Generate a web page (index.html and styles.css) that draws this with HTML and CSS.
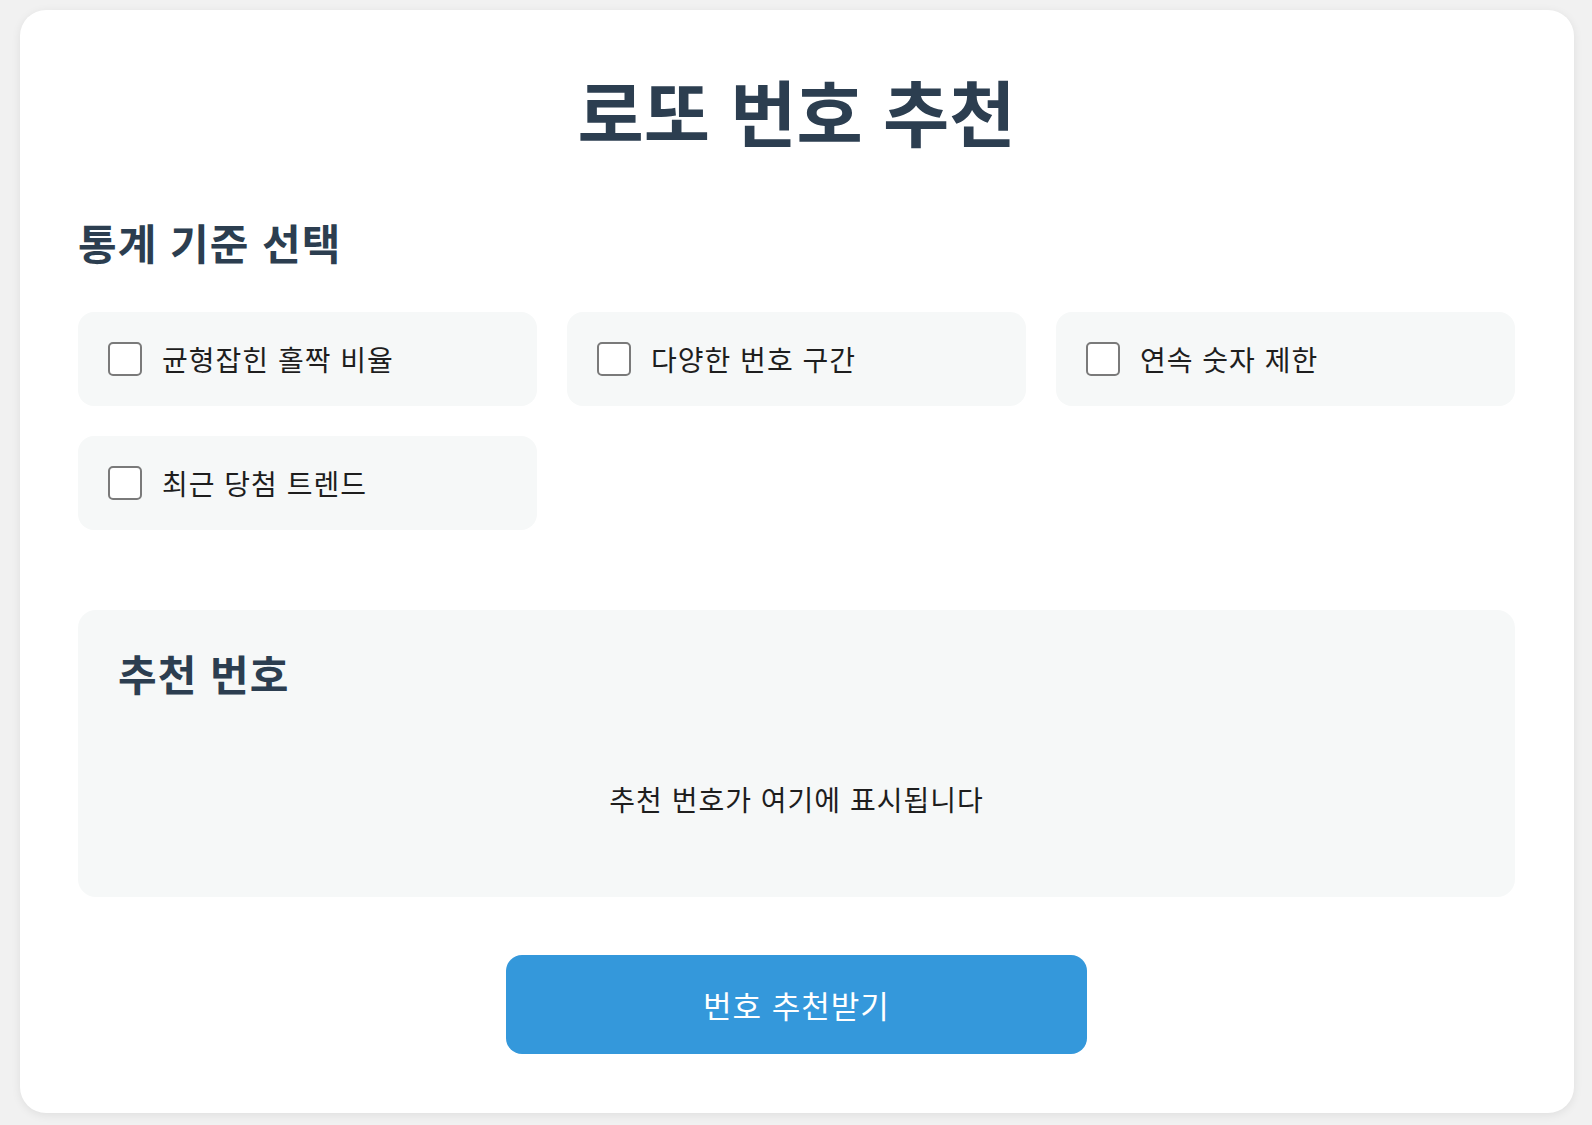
FILE: index.html
```html
<!DOCTYPE html>
<html lang="ko">
<head>
<meta charset="utf-8">
<title>로또 번호 추천</title>
<link rel="stylesheet" href="styles.css">
</head>
<body>
<main class="card">
  <h1 class="title">로또 번호 추천</h1>
  <h2 class="section-title">통계 기준 선택</h2>
  <div class="options">
    <label class="option"><input type="checkbox" class="check"><span>균형잡힌 홀짝 비율</span></label>
    <label class="option"><input type="checkbox" class="check"><span>다양한 번호 구간</span></label>
    <label class="option"><input type="checkbox" class="check"><span>연속 숫자 제한</span></label>
    <label class="option"><input type="checkbox" class="check"><span>최근 당첨 트렌드</span></label>
  </div>
  <section class="result">
    <h2 class="result-title">추천 번호</h2>
    <p class="placeholder">추천 번호가 여기에 표시됩니다</p>
  </section>
  <div class="actions">
    <button class="btn" type="button">번호 추천받기</button>
  </div>
</main>
</body>
</html>
```
FILE: styles.css
```css
* { box-sizing: border-box; }
html, body { margin: 0; padding: 0; }
body {
  background: #f1f1f1;
  font-family: "Noto Sans CJK KR", "Noto Sans", sans-serif;
  color: #222;
  padding: 10px 18px 13px 20px;
}
.card {
  background: #fff;
  border-radius: 26px;
  box-shadow: 0 2px 10px rgba(0,0,0,0.08);
  padding: 58px 59px 59px 58px;
}
.title {
  margin: 0;
  text-align: center;
  font-size: 72px;
  line-height: 84px;
  font-weight: 700;
  color: #2c3e50;
}
.section-title {
  margin: 65px 0 0;
  font-size: 42px;
  line-height: 50px;
  letter-spacing: 1px;
  font-weight: 700;
  color: #2c3e50;
}
.options {
  margin-top: 45px;
  display: grid;
  grid-template-columns: repeat(3, 1fr);
  gap: 30px;
}
.option {
  display: flex;
  align-items: center;
  gap: 20px;
  height: 94px;
  padding: 0 30px;
  background: #f6f8f8;
  border-radius: 16px;
  font-size: 28px;
  letter-spacing: 1px;
  color: #1e1e1e;
}
.check {
  -webkit-appearance: none;
  appearance: none;
  margin: 0;
  width: 34px;
  height: 34px;
  border: 2px solid #7a7a7a;
  border-radius: 5px;
  background: #fff;
  flex: none;
}
.result {
  margin-top: 80px;
  background: #f6f8f8;
  border-radius: 18px;
  padding: 38px 40px 78px;
}
.result-title {
  margin: 0;
  font-size: 42px;
  line-height: 50px;
  letter-spacing: 1px;
  font-weight: 700;
  color: #2c3e50;
}
.placeholder {
  margin: 81px 0 0;
  text-align: center;
  font-size: 28px;
  line-height: 40px;
  letter-spacing: 1px;
  color: #1e1e1e;
}
.actions {
  margin-top: 58px;
  display: flex;
  justify-content: center;
}
.btn {
  width: 581px;
  height: 99px;
  border: none;
  border-radius: 16px;
  background: #3498db;
  color: #fff;
  font-family: inherit;
  font-size: 31px;
  letter-spacing: 1px;
}
```
